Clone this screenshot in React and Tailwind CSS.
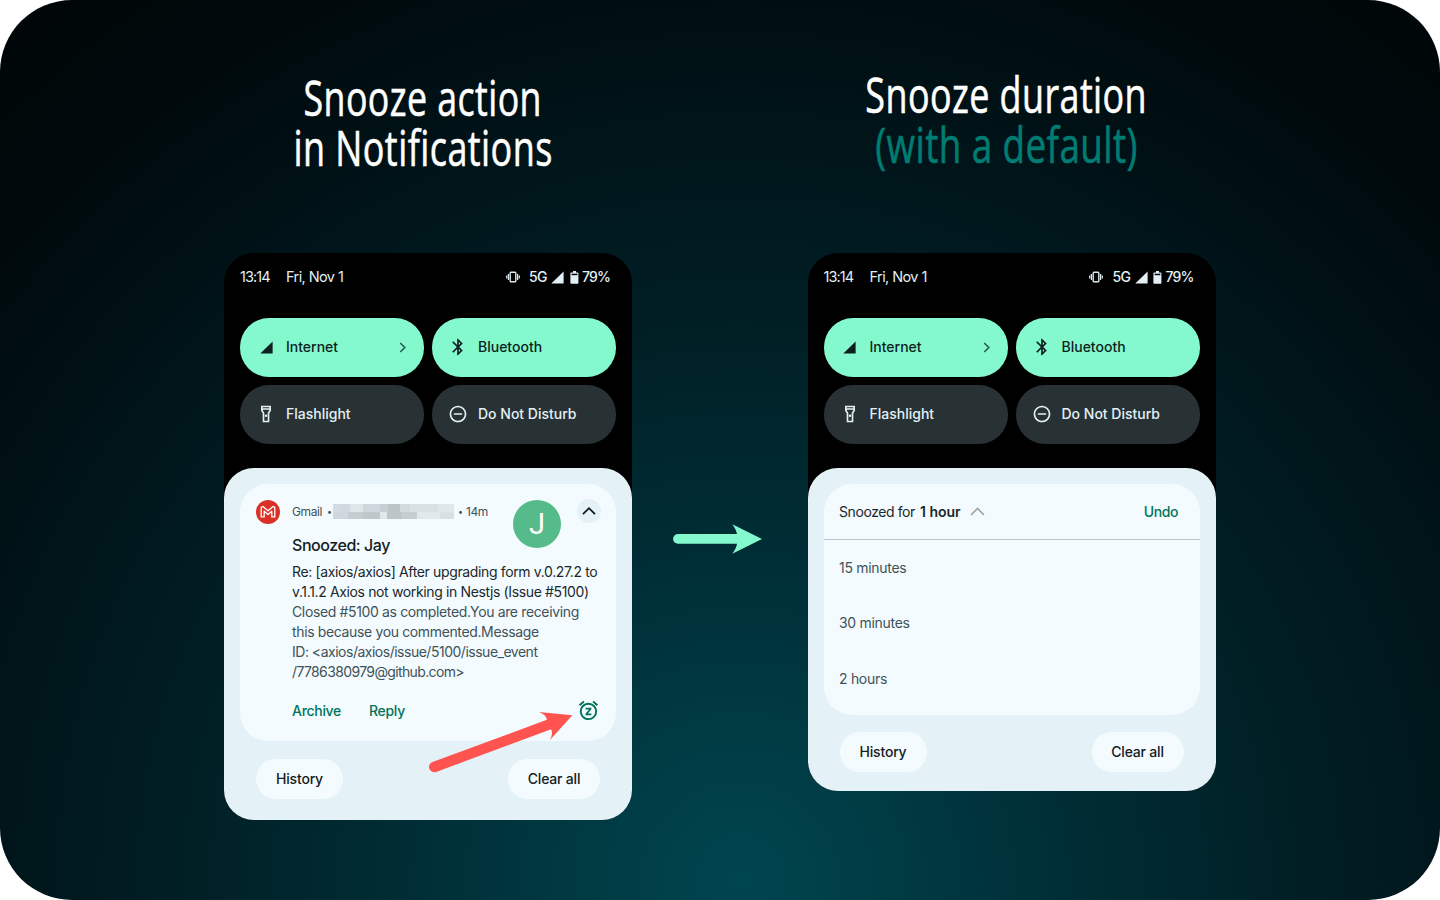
import { MdBluetooth, MdOutlineFlashlightOn, MdRemoveCircleOutline, MdSnooze } from 'react-icons/md';

function VibrateIcon() {
  return (
    <svg width="14" height="12" viewBox="0 0 14 12" fill="none" stroke="#dbe9ee" strokeWidth="1.4">
      <rect x="4.2" y="1.2" width="5.6" height="9.6" rx="0.8" />
      <path d="M2.4 3v6M0.7 4.4v3.2M11.6 3v6M13.3 4.4v3.2" strokeWidth="1.2" />
    </svg>
  );
}

function SignalIcon({ className }) {
  return (
    <svg width="13" height="13" viewBox="0 0 13 13" className={className}>
      <path d="M12.6 0.4v12.2H0.3z" fill="currentColor" />
    </svg>
  );
}

function BatteryIcon() {
  return (
    <svg width="9" height="13" viewBox="0 0 9 13">
      <path d="M3 0h3v1.4h1.6q.8 0 .8.8v9.8q0 .8-.8.8H1.2q-.8 0-.8-.8V2.2q0-.8.8-.8H3z" fill="#e2f0f6" />
      <path d="M1.6 2.7h5.8v1.5H1.6z" fill="#000" />
    </svg>
  );
}

function ChevronUp({ width, height, stroke, strokeWidth }) {
  return (
    <svg width={width} height={height} viewBox="0 0 14 8" fill="none" stroke={stroke} strokeWidth={strokeWidth}>
      <path d="M1 7.2 7 1.2l6 6" />
    </svg>
  );
}

function GmailIcon() {
  return (
    <svg width="24" height="24" viewBox="0 0 24 24" fill="none">
      <circle cx="12" cy="12" r="12" fill="#db3026" />
      <path
        d="M5.2 16.9V7.9q0-1.2 1.3-1.2h.7L12 10.8l4.8-4.1h.7q1.3 0 1.3 1.2v9h-3v-5.6L12 14.6l-3.8-3.3v5.6z"
        stroke="#fff"
        strokeWidth="1.3"
        strokeLinejoin="round"
      />
    </svg>
  );
}

function StatusBar() {
  return (
    <div className="flex h-[48px] items-center pl-4 pr-[22px] text-[#e2f0f6]">
      <span className="w-[46px] text-[14.5px] tracking-[-0.95px]">13:14</span>
      <span className="text-[14.5px] tracking-[-0.58px]">Fri, Nov 1</span>
      <span className="ml-auto mr-[9px]"><VibrateIcon /></span>
      <span className="-mt-px mr-[4px] text-[14px] font-medium tracking-[-0.5px]">5G</span>
      <SignalIcon />
      <span className="ml-[5.5px] mr-[3.5px]"><BatteryIcon /></span>
      <span className="-mt-px w-[28px] text-[14px] font-medium tracking-[-0.8px]">79%</span>
    </div>
  );
}

function Tile({ icon, label, active, chevron }) {
  return (
    <div
      className={
        active
          ? 'flex h-[59px] items-center rounded-[29px] bg-[#84f9cd] pb-px pl-4 pr-[17px] text-[#0d1f21]'
          : 'flex h-[59px] items-center rounded-[29px] bg-[#283234] pb-px pl-4 pr-[17px] text-[#e2f0f6]'
      }
    >
      <span className="flex w-5 justify-center">{icon}</span>
      <span className="-mt-px ml-[10px] text-[14px] font-medium">{label}</span>
      {chevron && (
        <svg className="ml-auto" width="8" height="11" viewBox="0 0 8 11" fill="none" stroke="#2c5a54" strokeWidth="1.6">
          <path d="m1.2 1 4.6 4.5-4.6 4.5" />
        </svg>
      )}
    </div>
  );
}

function QuickSettings() {
  return (
    <div className="mx-4 mt-[17px] grid grid-cols-2 gap-2">
      <Tile active chevron icon={<SignalIcon />} label="Internet" />
      <Tile active icon={<MdBluetooth size={20} />} label="Bluetooth" />
      <Tile icon={<MdOutlineFlashlightOn size={20} />} label="Flashlight" />
      <Tile icon={<MdRemoveCircleOutline size={20} />} label="Do Not Disturb" />
    </div>
  );
}

function Footer() {
  return (
    <div className="mx-4 flex h-10 justify-between text-[14px] font-medium tracking-[-0.2px] text-[#142022]">
      <span className="flex w-[87px] items-center justify-center rounded-full bg-[#f3fbff] pb-px">History</span>
      <span className="flex w-[92px] items-center justify-center rounded-full bg-[#f3fbff] pb-px">Clear all</span>
    </div>
  );
}

function Phone({ children }) {
  return (
    <div className="rounded-[30px] bg-black">
      <StatusBar />
      <QuickSettings />
      <div className="mt-6 rounded-[30px] bg-[#e4f1f7] px-4 pt-4">{children}</div>
    </div>
  );
}

function RedactedAddress() {
  return (
    <div className="ml-[2px] mr-[4px] h-[15px] w-[121px] shrink-0">
      <div className="flex h-[8px]">
        <i className="w-[7px] bg-[#d3dce1]" />
        <i className="w-[10px] bg-[#d0d9de]" />
        <i className="w-[13px] bg-[#dfe6ea]" />
        <i className="w-[17px] bg-[#d0d7dc]" />
        <i className="w-[8px] bg-[#c8ced2]" />
        <i className="w-[12px] bg-[#bcc4c8]" />
        <i className="w-[10px] bg-[#d3dadd]" />
        <i className="w-[28px] bg-[#d9e1e5]" />
        <i className="w-[16px] bg-[#e0e7eb]" />
      </div>
      <div className="flex h-[7px]">
        <i className="w-[15px] bg-[#cfd7dc]" />
        <i className="w-[15px] bg-[#c5cdd2]" />
        <i className="w-[17px] bg-[#bfc7cb]" />
        <i className="w-[7px] bg-[#e1e8ec]" />
        <i className="w-[15px] bg-[#bec5ca]" />
        <i className="w-[15px] bg-[#c6cdd1]" />
        <i className="w-[23px] bg-[#e0e8ec]" />
        <i className="w-[14px] bg-[#d9e0e4]" />
      </div>
    </div>
  );
}

function NotificationCard() {
  return (
    <div className="h-[257px] rounded-[28px] bg-[#f3fbff] pl-4 pr-[15px] pt-[15px]">
      <div className="flex items-start">
        <div className="mt-[0.5px]"><GmailIcon /></div>
        <div className="ml-3 w-[221px]">
          <div className="flex h-[25px] items-center text-[12px] text-[#3f5258]">
            <span className="w-[35px] tracking-[-0.4px]">Gmail</span>
            <span className="w-[4px] text-[9px]">•</span>
            <RedactedAddress />
            <span className="w-[4px] text-[9px]">•</span>
            <span className="ml-[4px] tracking-[-0.5px]">14m</span>
          </div>
          <div className="mt-[10px] text-[16px] font-medium leading-[22px] tracking-[-0.45px] text-[#142022]">Snoozed: Jay</div>
        </div>
        <div className="mt-[0.5px] flex size-12 items-center justify-center rounded-full bg-[#56bb8a] pt-[3px] font-['Roboto'] text-[29px] text-white">J</div>
        <div className="ml-4 flex size-6 items-center justify-center rounded-full bg-[#e4f1f7]">
          <ChevronUp width="14" height="8" stroke="#0c1516" strokeWidth="1.7" />
        </div>
      </div>
      <div className="ml-9 mt-[6px] whitespace-nowrap text-[14px] leading-[19.9px] tracking-[-0.36px] text-[#3f5258]">
        <div className="text-[#1b282b]">Re: [axios/axios] After upgrading form v.0.27.2 to</div>
        <div className="text-[#1b282b]">v.1.1.2 Axios not working in Nestjs (Issue #5100)</div>
        <div>Closed #5100 as completed.You are receiving</div>
        <div>this because you commented.Message</div>
        <div className="tracking-[-0.49px]">ID: &lt;axios/axios/issue/5100/issue_event</div>
        <div className="tracking-[-0.63px]">/7786380979@github.com&gt;</div>
      </div>
      <div className="ml-9 mr-px mt-[17px] flex h-6 items-center text-[14px] font-medium tracking-[-0.3px] text-[#00735a]">
        <span className="w-[77px]">Archive</span>
        <span>Reply</span>
        <MdSnooze size={23} className="ml-auto mt-px" />
      </div>
    </div>
  );
}

function SnoozeCard() {
  return (
    <div className="h-[231px] overflow-hidden rounded-[28px] bg-[#f3fbff] text-[14px]">
      <div className="flex h-[56px] items-center border-b border-[#bcc8cd] px-[15.5px] pb-px text-[#1b282b]">
        <span className="w-[81px] tracking-[-0.42px]">Snoozed for</span>
        <b className="w-[50px] font-semibold">1 hour</b>
        <ChevronUp width="15" height="9" stroke="#a0a3a5" strokeWidth="1.5" />
        <span className="ml-auto mr-[6px] font-medium tracking-[-0.4px] text-[#00735a]">Undo</span>
      </div>
      <div className="px-[15.5px] leading-[55.4px] tracking-[-0.3px] text-[#3f5258]">
        <div>15 minutes</div>
        <div>30 minutes</div>
        <div>2 hours</div>
      </div>
    </div>
  );
}

function Heading({ children, className }) {
  return (
    <h1 className={`flex flex-col items-center whitespace-nowrap font-['Open_Sans'] text-[50px] leading-[50px] tracking-[0.6px] text-white [-webkit-text-stroke:0.6px_currentColor] ${className}`}>
      {children}
    </h1>
  );
}

export default function App() {
  return (
    <main className="relative flex h-[900px] w-[1440px] overflow-hidden rounded-[72px] bg-[radial-gradient(circle_at_740px_880px,#00464f_0px,#002c34_350px,#002026_540px,#001318_780px,#00090c_980px,#000505_1200px)] pl-[224px] font-['Inter',sans-serif]">
      <section className="w-[408px]">
        <Heading className="h-[253px] pr-[10px] pt-[72px]">
          <span className="scale-x-[.715]">Snooze action</span>
          <span className="scale-x-[.72]">in Notifications</span>
        </Heading>
        <Phone>
          <NotificationCard />
          <div className="pb-[21px] pt-[18px]"><Footer /></div>
        </Phone>
      </section>

      <div className="w-[175.5px] pl-[39px] pt-[523px]">
        <svg width="92" height="32" viewBox="0 0 92 32">
          <path d="M7 15.9h60" stroke="#84f9cd" strokeWidth="9.8" strokeLinecap="round" />
          <path d="M91 15.9 61.3 1.2q4 5.5 4.7 10v9.6q-.7 4.5-4.7 10z" fill="#84f9cd" />
        </svg>
      </div>

      <section className="w-[408px]">
        <Heading className="h-[253px] pr-[10px] pt-[69px]">
          <span className="scale-x-[.718]">Snooze duration</span>
          <span className="scale-x-[.735] text-[#007d73]">(with a default)</span>
        </Heading>
        <Phone>
          <SnoozeCard />
          <div className="pb-[19px] pt-[17px]"><Footer /></div>
        </Phone>
      </section>

      <svg className="absolute left-[424px] top-[704px]" width="152" height="72" viewBox="424 704 152 72">
        <path d="M434.3 767 550 724.2" stroke="#ff5350" strokeWidth="10.5" strokeLinecap="round" />
        <path d="M572.3 715.3 539 712q7 2.5 8 7.7l4 9.6q2.5 3.5-1 10.700z" fill="#ff5350" />
      </svg>
    </main>
  );
}
